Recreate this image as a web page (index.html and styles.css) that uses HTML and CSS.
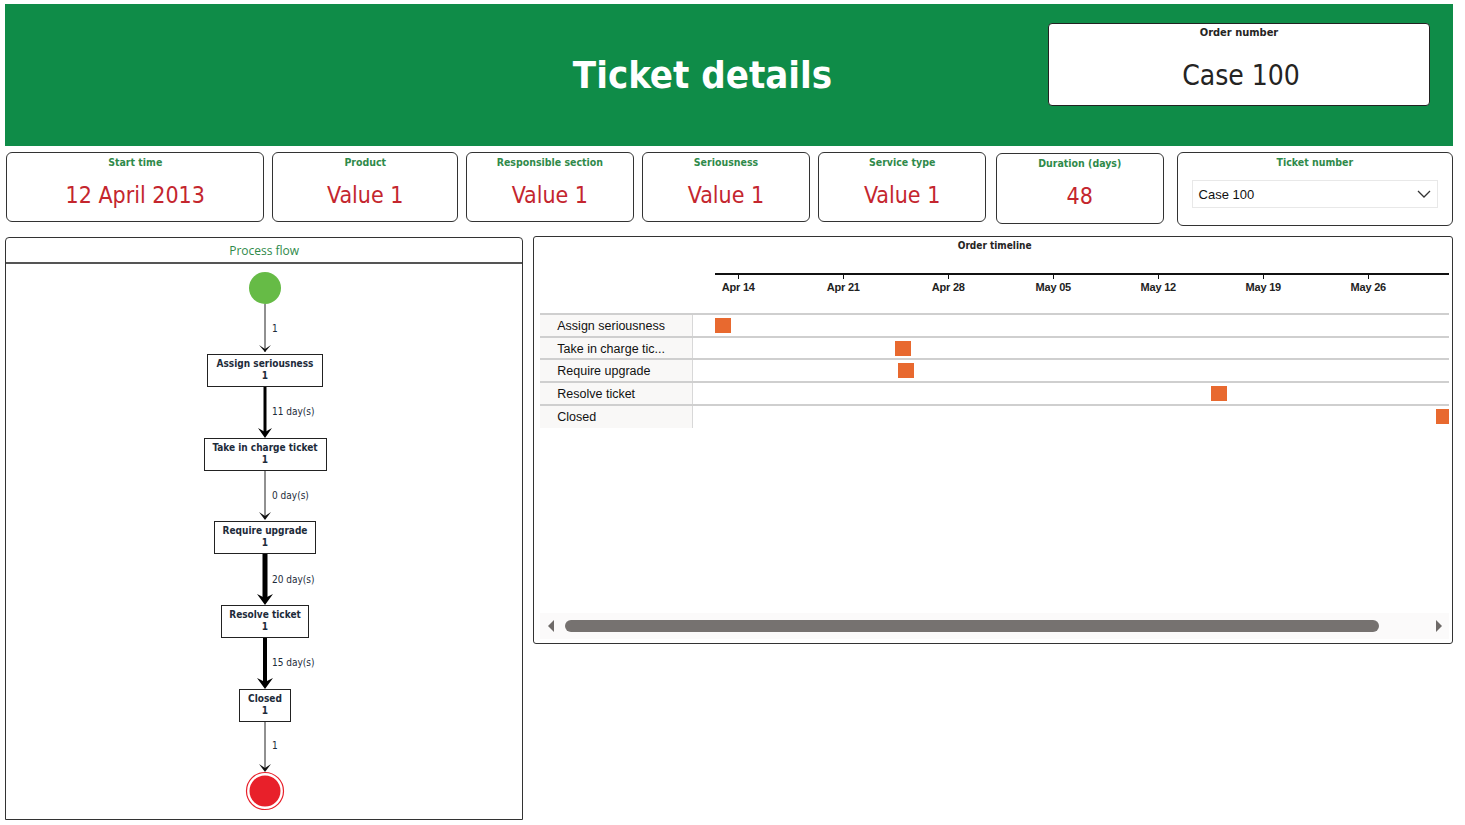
FILE: index.html
```html
<!DOCTYPE html>
<html>
<head>
<meta charset="utf-8">
<link rel="stylesheet" href="styles.css">
</head>
<body>
<header class="banner">
  <h1 class="title">Ticket details</h1>
  <div class="order-box">
    <div class="order-label">Order number</div>
    <div class="order-value">Case 100</div>
  </div>
</header>

<section class="cards">
  <div class="card c-start"><div class="card-label">Start time</div><div class="card-value">12 April 2013</div></div>
  <div class="card c-product"><div class="card-label">Product</div><div class="card-value">Value 1</div></div>
  <div class="card c-section"><div class="card-label">Responsible section</div><div class="card-value">Value 1</div></div>
  <div class="card c-serious"><div class="card-label">Seriousness</div><div class="card-value">Value 1</div></div>
  <div class="card c-service"><div class="card-label">Service type</div><div class="card-value">Value 1</div></div>
  <div class="card c-duration"><div class="card-label">Duration (days)</div><div class="card-value">48</div></div>
  <div class="card c-ticket">
    <div class="card-label">Ticket number</div>
    <div class="dropdown">
      <span>Case 100</span>
      <svg class="chev" width="14" height="8" viewBox="0 0 14 8"><path d="M1 1 L7 7 L13 1" fill="none" stroke="#333" stroke-width="1.3"/></svg>
    </div>
  </div>
</section>

<section class="panels">
  <div class="panel flow">
    <div class="flow-head">Process flow</div>
    <svg class="flow-svg" width="516" height="553" viewBox="6 264 516 553">
      <g class="edges">
        <line x1="265" y1="304" x2="265" y2="352" stroke="#222" stroke-width="1"/>
        <path d="M259 345 L265 352 L271 345 L265 349 Z" fill="#111"/>
        <line x1="265" y1="386" x2="265" y2="434" stroke="#000" stroke-width="3"/>
        <path d="M258 428 L265 438 L272 428 L265 432 Z" fill="#000"/>
        <line x1="265" y1="470" x2="265" y2="519" stroke="#222" stroke-width="1"/>
        <path d="M259 512 L265 520 L271 512 L265 516 Z" fill="#111"/>
        <line x1="265" y1="553" x2="265" y2="600" stroke="#000" stroke-width="5"/>
        <path d="M257 594 L265 605 L273 594 L265 598 Z" fill="#000"/>
        <line x1="265" y1="637" x2="265" y2="684" stroke="#000" stroke-width="4"/>
        <path d="M257 678 L265 689 L273 678 L265 682 Z" fill="#000"/>
        <line x1="265" y1="721" x2="265" y2="770" stroke="#222" stroke-width="1"/>
        <path d="M259 764 L265 772 L271 764 L265 768 Z" fill="#111"/>
      </g>
      <g class="edge-labels">
        <text x="272" y="332">1</text>
        <text x="272" y="415">11 day(s)</text>
        <text x="272" y="499">0 day(s)</text>
        <text x="272" y="583">20 day(s)</text>
        <text x="272" y="666">15 day(s)</text>
        <text x="272" y="749">1</text>
      </g>
      <circle cx="265" cy="288" r="16" fill="#66bb46"/>
      <g class="nodes">
        <rect x="207.5" y="354.5" width="115" height="32" fill="#fff" stroke="#222"/>
        <text x="265" y="367">Assign seriousness</text><text x="265" y="379">1</text>
        <rect x="204.5" y="438.5" width="122" height="32" fill="#fff" stroke="#222"/>
        <text x="265" y="451">Take in charge ticket</text><text x="265" y="463">1</text>
        <rect x="214.5" y="521.5" width="101" height="32" fill="#fff" stroke="#222"/>
        <text x="265" y="534">Require upgrade</text><text x="265" y="546">1</text>
        <rect x="221.5" y="605.5" width="87" height="32" fill="#fff" stroke="#222"/>
        <text x="265" y="618">Resolve ticket</text><text x="265" y="630">1</text>
        <rect x="239.5" y="689.5" width="51" height="32" fill="#fff" stroke="#222"/>
        <text x="265" y="702">Closed</text><text x="265" y="714">1</text>
      </g>
      <circle cx="265" cy="791" r="18.5" fill="#fff" stroke="#e8202a" stroke-width="1.2"/>
      <circle cx="265" cy="791" r="15.5" fill="#e8202a"/>
    </svg>
  </div>

  <div class="panel timeline">
    <div class="tl-title">Order timeline</div>
    <div class="axis">
      <div class="axis-line"></div>
      <div class="tick" style="left:198px"><span>Apr 14</span></div>
      <div class="tick" style="left:303px"><span>Apr 21</span></div>
      <div class="tick" style="left:408px"><span>Apr 28</span></div>
      <div class="tick" style="left:513px"><span>May 05</span></div>
      <div class="tick" style="left:618px"><span>May 12</span></div>
      <div class="tick" style="left:723px"><span>May 19</span></div>
      <div class="tick" style="left:828px"><span>May 26</span></div>
    </div>
    <div class="rows">
      <div class="row"><div class="row-label">Assign seriousness</div><div class="track"><i class="mark" style="left:22px"></i></div></div>
      <div class="row"><div class="row-label">Take in charge tic...</div><div class="track"><i class="mark" style="left:202px"></i></div></div>
      <div class="row"><div class="row-label">Require upgrade</div><div class="track"><i class="mark" style="left:205px"></i></div></div>
      <div class="row"><div class="row-label">Resolve ticket</div><div class="track"><i class="mark" style="left:518px"></i></div></div>
      <div class="row"><div class="row-label">Closed</div><div class="track"><i class="mark" style="left:743px"></i></div></div>
    </div>
    <div class="tl-space"></div>
    <div class="scrollbar">
      <svg class="sb-arrow" width="8" height="12" viewBox="0 0 8 12"><path d="M7 0 L1 6 L7 12 Z" fill="#6e6a68"/></svg>
      <div class="thumb"></div>
      <svg class="sb-arrow" width="8" height="12" viewBox="0 0 8 12"><path d="M1 0 L7 6 L1 12 Z" fill="#6e6a68"/></svg>
    </div>
  </div>
</section>
</body>
</html>
```

FILE: styles.css
```css
* { box-sizing: border-box; }
body {
  margin: 0;
  background: #fff;
  font-family: "DejaVu Sans Condensed", "DejaVu Sans", sans-serif;
  font-stretch: condensed;
  color: #252423;
  width: 1465px;
  height: 825px;
  overflow: hidden;
}

.banner {
  margin: 4px 12px 0 5px;
  height: 142px;
  background: #0f8c48;
  display: flex;
  align-items: flex-start;
}
.title {
  flex: 1;
  margin: 0;
  padding-left: 352px;
  padding-top: 46px;
  text-align: center;
  color: #fff;
  font-size: 38px;
  font-weight: bold;
  line-height: 50px;
}
.order-box {
  width: 382px;
  height: 83px;
  margin: 19px 23px 0 0;
  background: #fff;
  border: 1.5px solid #222;
  border-radius: 4px;
  text-align: center;
}
.order-label {
  font-size: 11px;
  font-weight: bold;
  margin-top: 2px;
  line-height: 14px;
  color: #252423;
}
.order-value {
  font-size: 28px;
  margin-top: 19px;
  line-height: 34px;
  color: #252423;
  padding-left: 4px;
}

.cards {
  display: flex;
  align-items: flex-start;
  margin: 6px 12px 0 5px;
}
.card {
  height: 70px;
  border: 1.5px solid #333;
  border-radius: 6px;
  text-align: center;
  margin-right: 8px;
}
.c-start { width: 259px; margin-left: 1px; }
.c-product { width: 186px; }
.c-section { width: 168px; }
.c-serious { width: 169px; }
.c-service { width: 168px; margin-right: 10px; }
.c-duration { width: 168px; height: 71px; margin-top: 1px; margin-right: 13px; }
.c-ticket { width: 277px; height: 74px; margin-right: 0; }
.card-label {
  color: #2f8a4a;
  font-size: 10.5px;
  font-weight: bold;
  line-height: 13px;
  margin-top: 3px;
}
.card-value {
  color: #c4262e;
  font-size: 23px;
  line-height: 28px;
  margin-top: 12px;
}
.c-duration .card-label { margin-top: 3px; }
.dropdown {
  margin: 11px 14px 0 14px;
  height: 28px;
  border: 1px solid #e8e8e8;
  display: flex;
  align-items: center;
  justify-content: space-between;
  padding: 0 6px 0 6px;
  font-family: "Liberation Sans", Arial, sans-serif;
  font-stretch: normal;
  font-size: 13px;
  color: #111;
}

.panels {
  display: flex;
  align-items: flex-start;
  margin: 10px 12px 0 5px;
  gap: 10px;
}
.panel {
  border: 1.5px solid #333;
  border-radius: 4px 4px 0 0;
  background: #fff;
}
.flow {
  width: 519px;
  height: 583px;
  margin-top: 1px;
}
.flow-head {
  height: 26px;
  border-bottom: 2px solid #555;
  text-align: center;
  color: #2f8a4a;
  font-family: "Open Sans", sans-serif;
  font-stretch: normal;
  font-size: 12px;
  line-height: 25px;
}
.flow-svg { display: block; }
.flow-svg text {
  font-family: "DejaVu Sans Condensed", "DejaVu Sans", sans-serif;
  font-stretch: condensed;
  font-size: 10px;
  font-weight: bold;
  fill: #1d2b3a;
}
.nodes text { text-anchor: middle; }
.edge-labels text { font-weight: normal; font-size: 10px; fill: #1d2b3a; }

.timeline {
  width: 921px;
  height: 408px;
  border-radius: 3px;
  display: flex;
  flex-direction: column;
  padding: 0 3px 0 6px;
}
.tl-title {
  text-align: center;
  font-size: 10px;
  font-weight: bold;
  color: #252423;
  line-height: 14px;
  margin-top: 2px;
}
.axis {
  position: relative;
  height: 60px;
}
.axis-line {
  position: absolute;
  left: 175px;
  right: 0;
  top: 20px;
  height: 2px;
  background: #111;
}
.tick {
  position: absolute;
  top: 20px;
  width: 1px;
  height: 6px;
  background: #111;
}
.tick span {
  position: absolute;
  top: 8px;
  left: -30px;
  width: 60px;
  text-align: center;
  font-family: "Liberation Sans", Arial, sans-serif;
  font-stretch: normal;
  font-size: 11px;
  font-weight: bold;
  color: #222;
  letter-spacing: -0.2px;
}
.rows {
  border-top: 2px solid #cfcfcf;
}
.row {
  display: flex;
  height: 22.7px;
  border-bottom: 2px solid #cfcfcf;
}
.row:last-child { border-bottom: none; }
.row-label {
  width: 153px;
  background: #f9f8f7;
  border-right: 1.5px solid #d8d8d8;
  padding-left: 17px;
  font-family: "Liberation Sans", Arial, sans-serif;
  font-stretch: normal;
  font-size: 12.5px;
  line-height: 22px;
  color: #111;
  white-space: nowrap;
}
.track {
  flex: 1;
  position: relative;
  overflow: hidden;
}
.mark {
  position: absolute;
  top: 3px;
  width: 16px;
  height: 15px;
  background: #e8692f;
}
.tl-space { flex: 1; }
.scrollbar {
  height: 26px;
  margin-bottom: 4px;
  background: #fbfafa;
  display: flex;
  align-items: center;
  padding: 0 6px 0 7px;
  gap: 10px;
}
.thumb {
  width: 814px;
  height: 12px;
  border-radius: 6px;
  background: #767270;
  margin-right: auto;
}
```
